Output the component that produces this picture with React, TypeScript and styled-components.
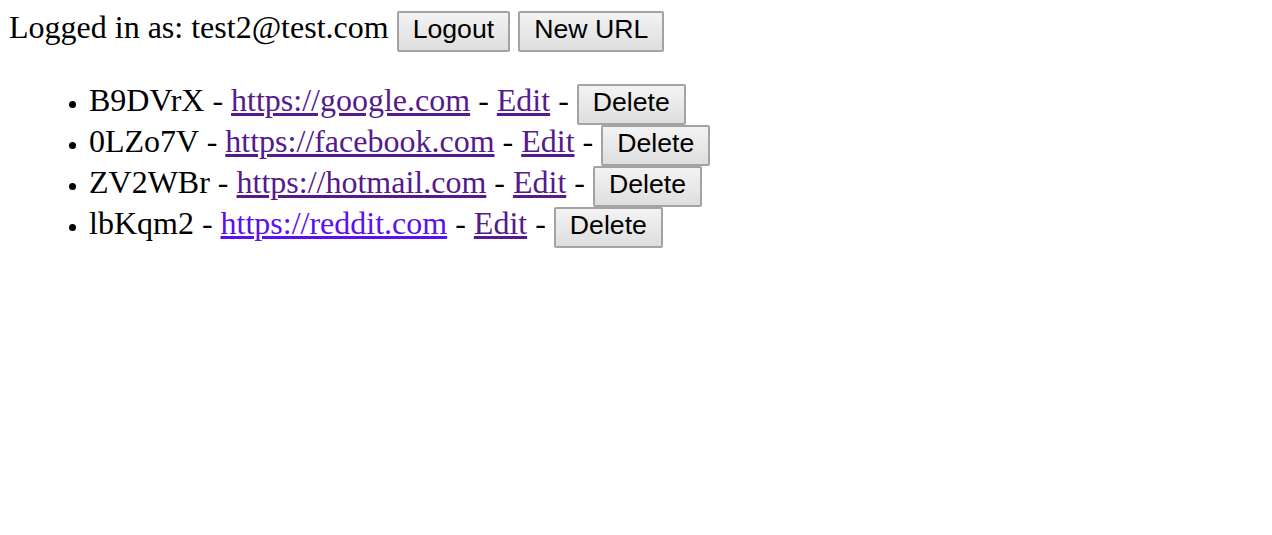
import React from 'react';
import styled, {createGlobalStyle} from 'styled-components';

interface IUrlItem {
  id: string;
  url: string;
  visited: boolean;
}

const urls: IUrlItem[] = [
  {id: 'B9DVrX', url: 'https://google.com', visited: true},
  {id: '0LZo7V', url: 'https://facebook.com', visited: true},
  {id: 'ZV2WBr', url: 'https://hotmail.com', visited: true},
  {id: 'lbKqm2', url: 'https://reddit.com', visited: false},
];

export default function App() {
  return (
    <>
      <GlobalStyle />
      <Page>
        <Header>
          Logged in as: test2@test.com <Button>Logout</Button>{' '}
          <Button>New URL</Button>
        </Header>
        <UrlList>
          {urls.map(item => (
            <UrlRow key={item.id}>
              {item.id} -{' '}
              <UrlLink href="#" visited={item.visited}>
                {item.url}
              </UrlLink>{' '}
              - <UrlLink href="#" visited>Edit</UrlLink> -{' '}
              <Button>Delete</Button>
            </UrlRow>
          ))}
        </UrlList>
      </Page>
    </>
  );
}

const GlobalStyle = createGlobalStyle`
  body {
    margin: 8px;
    background: #ffffff;
    color: #000000;
    font-family: "Liberation Serif", "Times New Roman", serif;
  }
`;

// the app is shown at 200% zoom
const Page = styled.div`
  zoom: 2;
  font-size: 16px;
  padding: 0.5px 0 0 0.5px;
`;

const Header = styled.div``;

const UrlList = styled.ul`
  margin: 16px 0;
  padding-left: 40px;
  list-style: disc;
`;

const UrlRow = styled.li`
  &::marker {
    font-size: 11px;
  }
`;

const UrlLink = styled.a<{visited: boolean}>`
  color: ${p => (p.visited ? '#551a8b' : '#5b10f0')};
  text-decoration: underline;
`;

const Button = styled.button`
  box-sizing: border-box;
  height: 20.5px;
  padding: 0 7px 2px;
  margin: 0 0 -1px;
  border: 1px solid #a3a3a3;
  border-radius: 1px;
  background: linear-gradient(#f3f3f3, #dedede);
  color: #000000;
  font-family: "Liberation Sans", Arial, sans-serif;
  font-size: 13.333px;
  line-height: normal;
  vertical-align: baseline;
`;
